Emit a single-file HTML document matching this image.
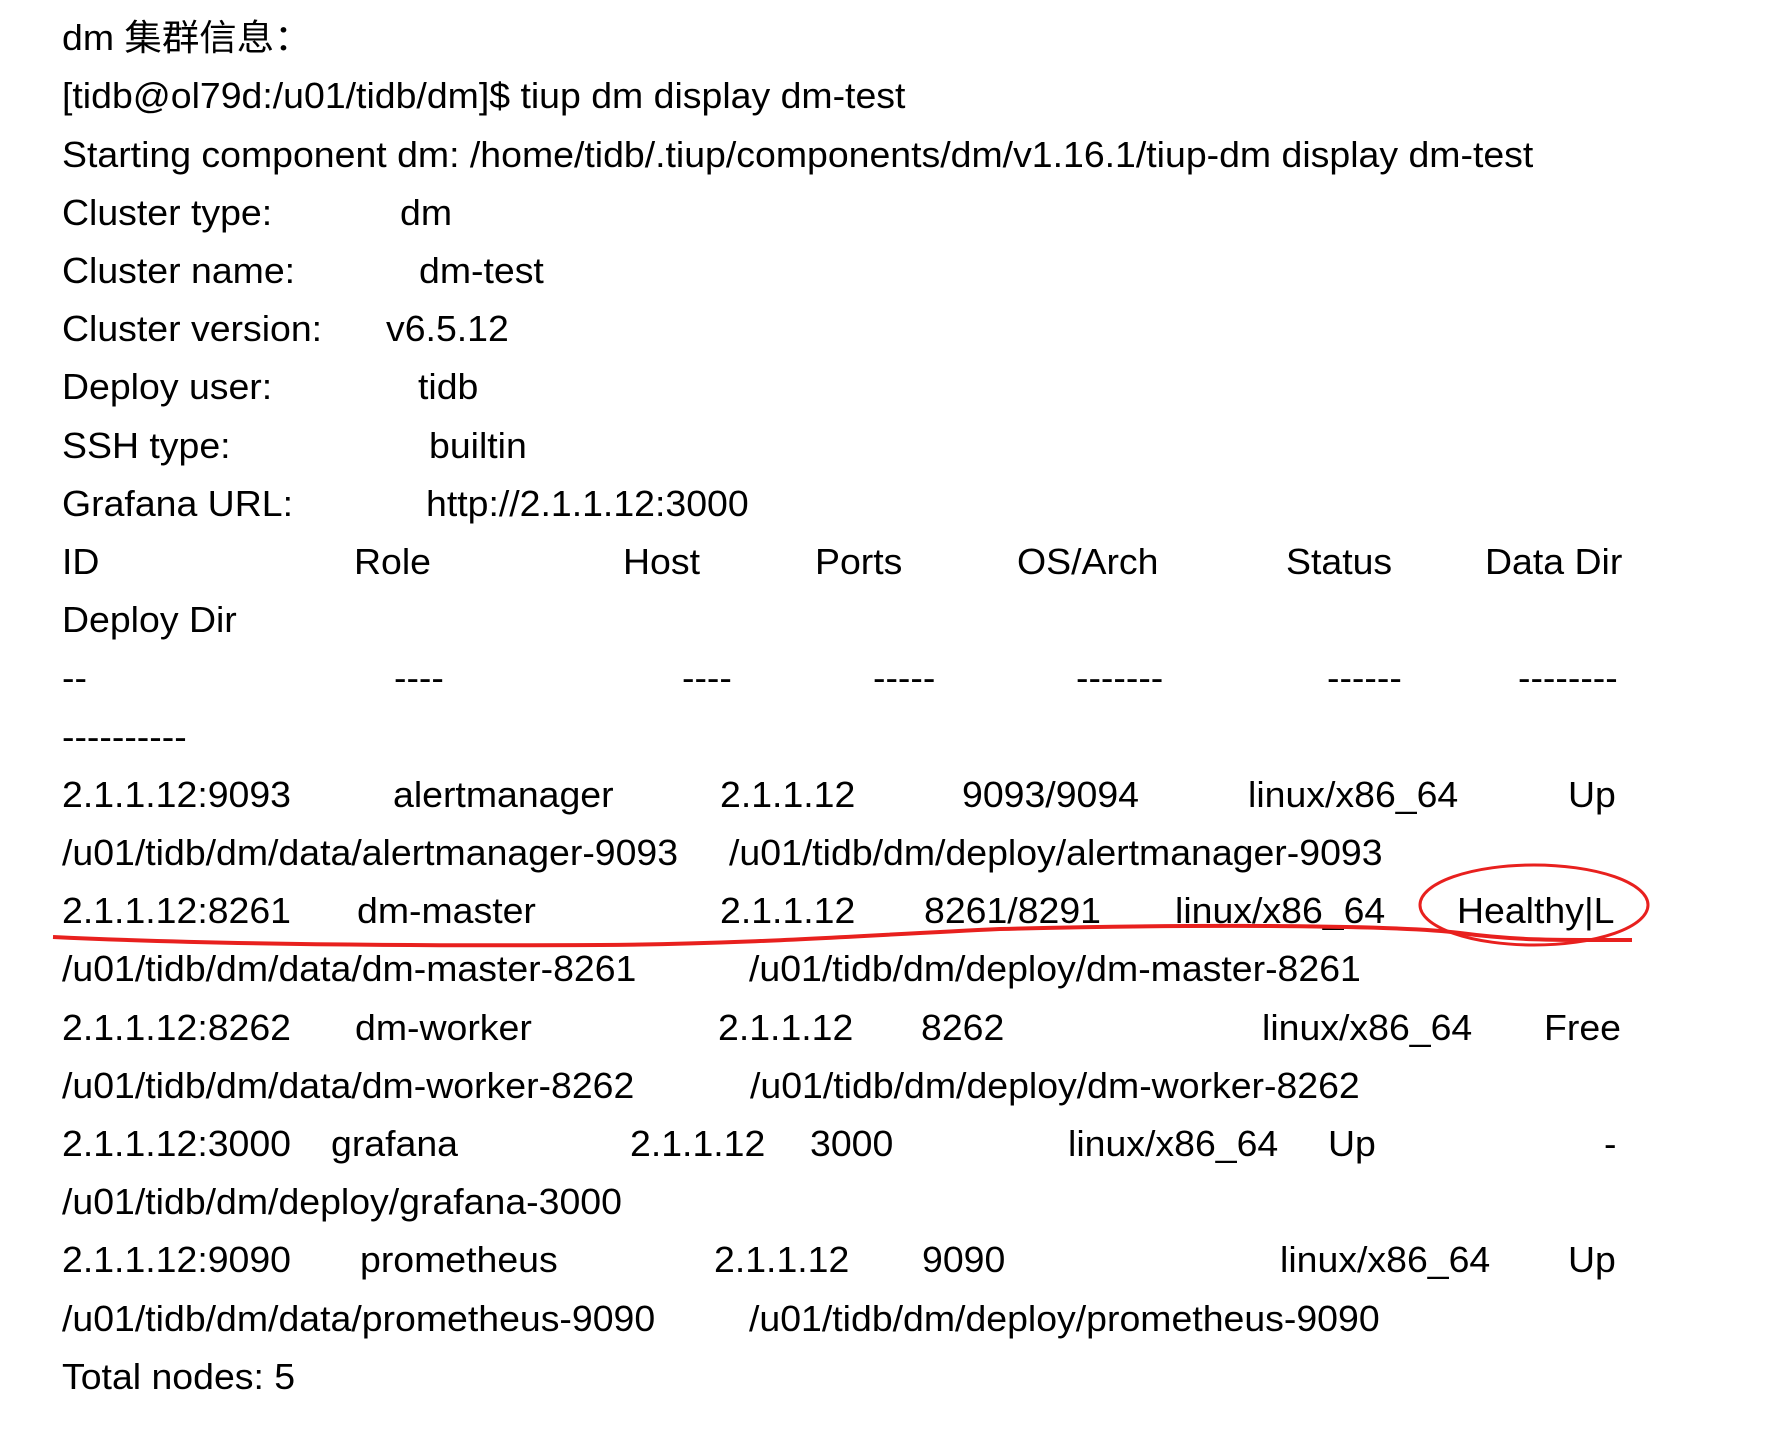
<!DOCTYPE html>
<html><head><meta charset="utf-8"><style>
html,body{margin:0;padding:0;background:#fff;width:1783px;height:1441px;overflow:hidden;position:relative}
.t{position:absolute;font-family:"Liberation Sans","Noto Sans CJK SC",sans-serif;font-size:36px;color:#000;white-space:pre;transform:scaleX(1.04);transform-origin:0 50%;line-height:40px}
</style></head><body>
<div id="c"></div>
<svg width="1783" height="1441" style="position:absolute;left:0;top:0">
<path d="M53 937 C200 944 400 946 600 945 C750 944 850 936 1000 929 C1200 924 1400 925 1460 933 C1520 941 1560 940 1632 940" stroke="#e8201e" stroke-width="4" fill="none"/>
<ellipse cx="1534" cy="905" rx="114" ry="40" stroke="#e8201e" stroke-width="3" fill="none"/>
</svg>
<script>
var rows=[
[[62,"dm 集群信息："]],
[[62,"[tidb@ol79d:/u01/tidb/dm]$ tiup dm display dm-test"]],
[[62,"Starting component dm: /home/tidb/.tiup/components/dm/v1.16.1/tiup-dm display dm-test"]],
[[62,"Cluster type:"],[400,"dm"]],
[[62,"Cluster name:"],[419,"dm-test"]],
[[62,"Cluster version:"],[386,"v6.5.12"]],
[[62,"Deploy user:"],[418,"tidb"]],
[[62,"SSH type:"],[429,"builtin"]],
[[62,"Grafana URL:"],[426,"http://2.1.1.12:3000"]],
[[62,"ID"],[354,"Role"],[623,"Host"],[815,"Ports"],[1017,"OS/Arch"],[1286,"Status"],[1485,"Data Dir"]],
[[62,"Deploy Dir"]],
[[62,"--"],[394,"----"],[682,"----"],[873,"-----"],[1076,"-------"],[1327,"------"],[1518,"--------"]],
[[62,"----------"]],
[[62,"2.1.1.12:9093"],[393,"alertmanager"],[720,"2.1.1.12"],[962,"9093/9094"],[1248,"linux/x86_64"],[1568,"Up"]],
[[62,"/u01/tidb/dm/data/alertmanager-9093"],[729,"/u01/tidb/dm/deploy/alertmanager-9093"]],
[[62,"2.1.1.12:8261"],[357,"dm-master"],[720,"2.1.1.12"],[924,"8261/8291"],[1175,"linux/x86_64"],[1457,"Healthy|L"]],
[[62,"/u01/tidb/dm/data/dm-master-8261"],[749,"/u01/tidb/dm/deploy/dm-master-8261"]],
[[62,"2.1.1.12:8262"],[355,"dm-worker"],[718,"2.1.1.12"],[921,"8262"],[1262,"linux/x86_64"],[1544,"Free"]],
[[62,"/u01/tidb/dm/data/dm-worker-8262"],[750,"/u01/tidb/dm/deploy/dm-worker-8262"]],
[[62,"2.1.1.12:3000"],[331,"grafana"],[630,"2.1.1.12"],[810,"3000"],[1068,"linux/x86_64"],[1328,"Up"],[1604,"-"]],
[[62,"/u01/tidb/dm/deploy/grafana-3000"]],
[[62,"2.1.1.12:9090"],[360,"prometheus"],[714,"2.1.1.12"],[922,"9090"],[1280,"linux/x86_64"],[1568,"Up"]],
[[62,"/u01/tidb/dm/data/prometheus-9090"],[749,"/u01/tidb/dm/deploy/prometheus-9090"]],
[[62,"Total nodes: 5"]]
];
var h="";
rows.forEach(function(r,i){var y=37.7+58.2*i-19.5;r.forEach(function(s){h+='<div class="t" style="left:'+s[0]+'px;top:'+y.toFixed(1)+'px">'+s[1]+'</div>';});});
document.getElementById("c").innerHTML=h;
</script>
</body></html>
